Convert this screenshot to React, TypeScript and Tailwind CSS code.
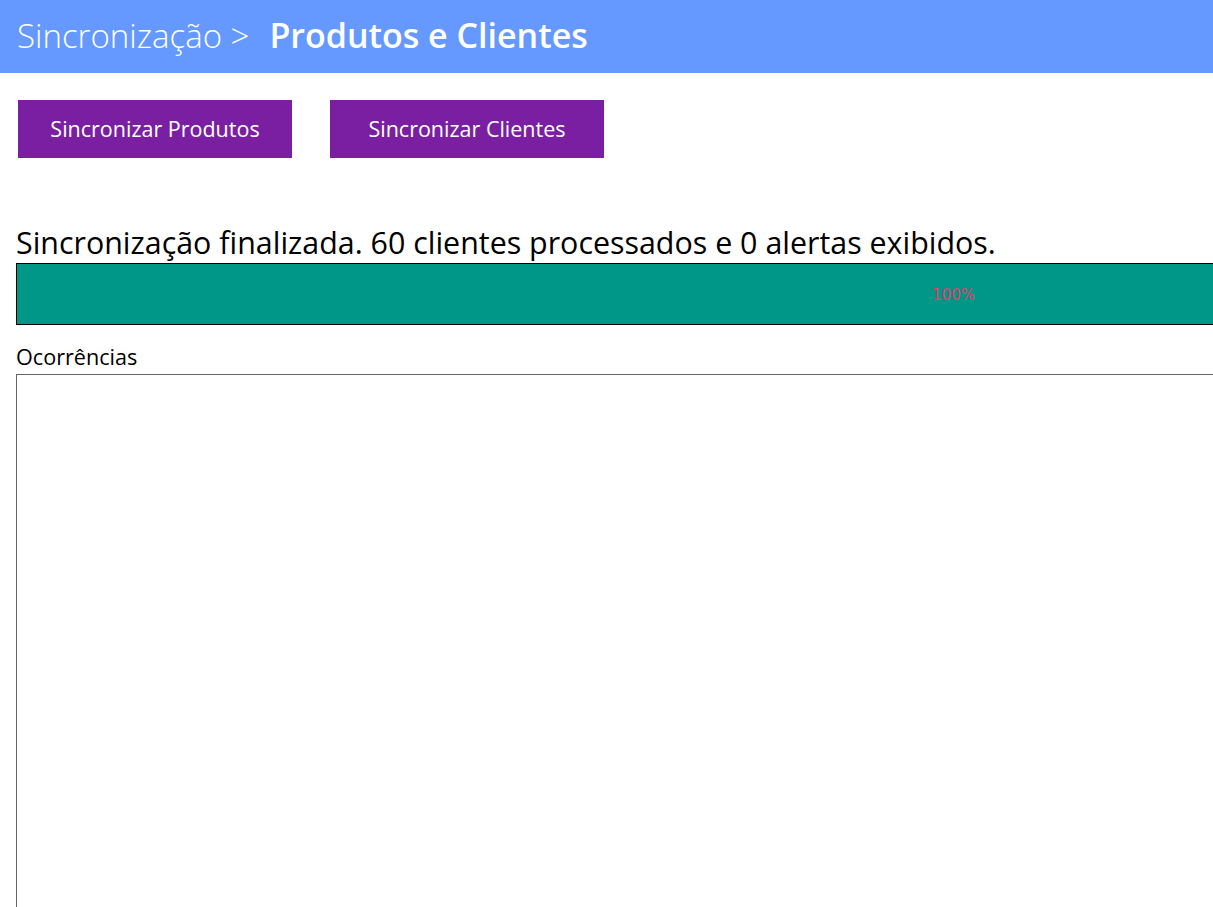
import React from 'react';

const font = { fontFamily: '"Open Sans", "Noto Sans", sans-serif' };

const App: React.FC = () => {
  const processed = 60;
  const alerts = 0;
  const progress = 100;

  return (
    <div className="h-screen bg-white overflow-hidden text-black" style={font}>
      <header className="h-[73px] bg-[#6699ff] flex items-center pl-[17px] pb-[2px] text-white whitespace-nowrap">
        <span className="font-light text-[33px]">Sincronização &gt;</span>
        <span className="font-semibold text-[34px] ml-[20px]">Produtos e Clientes</span>
      </header>

      <div className="flex gap-[38px] pl-[18px] pt-[27px]">
        <button className="w-[274px] h-[58px] bg-[#7b1fa2] text-white text-[21.5px]">Sincronizar Produtos</button>
        <button className="w-[274px] h-[58px] bg-[#7b1fa2] text-white text-[21.5px]">Sincronizar Clientes</button>
      </div>

      <div className="pl-4 pt-[65px]">
        <p className="text-[30.4px] leading-[40px] whitespace-nowrap">
          Sincronização finalizada. {processed} clientes processados e {alerts} alertas exibidos.
        </p>
        <div className="w-[1877px] h-[62px] border border-black bg-[#009688] flex items-center justify-center">
          <span className="text-[15px] text-[#e0406a] pt-[2px] pr-[2px]" style={{ fontFamily: '"DejaVu Sans", sans-serif' }}>
            {progress}%
          </span>
        </div>

        <div className="pt-[15px] text-[21.6px] leading-[34px]">Ocorrências</div>
        <div className="w-[1877px] h-[600px] border border-[#666666]" />
      </div>
    </div>
  );
};

export default App;
